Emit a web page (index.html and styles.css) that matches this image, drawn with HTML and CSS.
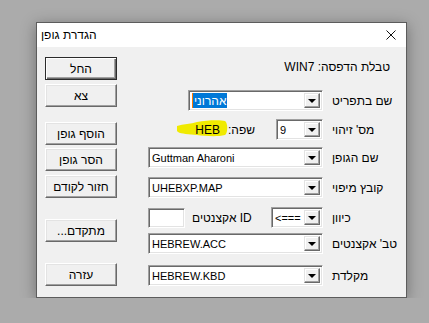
FILE: index.html
```html
<!DOCTYPE html>
<html lang="he">
<head>
    <meta charset="UTF-8">
    <title>הגדרת גופן</title>
    <link rel="stylesheet" href="styles.css">
</head>
<body>
<div class="dialog">
    <div class="titlebar">
        <span class="title" dir="rtl">הגדרת גופן</span>
        <svg class="close" viewBox="0 0 10 10">
            <path d="M0.5 0.5 L9.5 9.5 M9.5 0.5 L0.5 9.5"/>
        </svg>
    </div>
    <div class="content">
        <div class="buttons">
            <button class="btn default" dir="rtl">החל</button>
            <button class="btn" dir="rtl">צא</button>
            <button class="btn" dir="rtl">הוסף גופן</button>
            <button class="btn" dir="rtl">הסר גופן</button>
            <button class="btn" dir="rtl">חזור לקודם</button>
            <button class="btn" dir="rtl">מתקדם...</button>
            <button class="btn" dir="rtl">עזרה</button>
        </div>
        <div class="form">
            <div class="row row-table">
                <span class="label" dir="rtl">טבלת הדפסה: WIN7</span>
            </div>
            <div class="row">
                <div class="ctrl">
                    <div class="combo combo-menu">
                        <div class="combo-text"><span class="selected" dir="rtl">אהרוני</span></div>
                        <div class="drop"><i></i></div>
                    </div>
                </div>
                <span class="label" dir="rtl">שם בתפריט</span>
            </div>
            <div class="row">
                <div class="ctrl">
                    <div class="lang">
                        <svg class="marker" viewBox="0 0 52 17">
                            <path d="M0 6 C6 4 14 4 20 2 C30 0 44 0 48 1 C51 3 51 13 48 15 C40 17 28 16 20 15 C12 14 4 14 1 12 C-1 10 -1 7 0 6 Z"/>
                        </svg>
                        <span class="lang-code">HEB</span>
                        <span class="lang-label" dir="rtl">שפה:</span>
                    </div>
                    <div class="combo combo-id">
                        <div class="combo-text">9</div>
                        <div class="drop"><i></i></div>
                    </div>
                </div>
                <span class="label" dir="rtl">מס' זיהוי</span>
            </div>
            <div class="row">
                <div class="ctrl">
                    <div class="combo combo-wide">
                        <div class="combo-text">Guttman Aharoni</div>
                        <div class="drop"><i></i></div>
                    </div>
                </div>
                <span class="label" dir="rtl">שם הגופן</span>
            </div>
            <div class="row">
                <div class="ctrl">
                    <div class="combo combo-wide">
                        <div class="combo-text">UHEBXP.MAP</div>
                        <div class="drop"><i></i></div>
                    </div>
                </div>
                <span class="label" dir="rtl">קובץ מיפוי</span>
            </div>
            <div class="row">
                <div class="ctrl">
                    <div class="edit"></div>
                    <span class="acc-label" dir="rtl">ID אקצנטים</span>
                    <div class="combo combo-dir">
                        <div class="combo-text">&lt;===</div>
                        <div class="drop"><i></i></div>
                    </div>
                </div>
                <span class="label" dir="rtl">כיוון</span>
            </div>
            <div class="row">
                <div class="ctrl">
                    <div class="combo combo-wide">
                        <div class="combo-text">HEBREW.ACC</div>
                        <div class="drop"><i></i></div>
                    </div>
                </div>
                <span class="label" dir="rtl">טב' אקצנטים</span>
            </div>
            <div class="row">
                <div class="ctrl">
                    <div class="combo combo-wide">
                        <div class="combo-text">HEBREW.KBD</div>
                        <div class="drop"><i></i></div>
                    </div>
                </div>
                <span class="label" dir="rtl">מקלדת</span>
            </div>
        </div>
    </div>
</div>
</body>
</html>
```

FILE: styles.css
```css
body {
    margin: 0;
    padding: 22px 0 0 36px;
    background-color: #ababab;
    font-family: "Liberation Sans", "DejaVu Sans", sans-serif;
    font-size: 12px;
    color: #000;
}

.dialog {
    width: 369px;
    height: 274px;
    border: 1px solid #5c5c5c;
    background-color: #f0f0f0;
    box-shadow: 0 3px 14px rgba(0, 0, 0, 0.35);
    display: flex;
    flex-direction: column;
}

.titlebar {
    height: 24px;
    background-color: #fff;
    display: flex;
    align-items: center;
    justify-content: space-between;
    padding: 0 10px 0 4px;
}
.title {
    font-size: 12px;
}
.close {
    width: 10px;
    height: 10px;
}
.close path {
    stroke: #111;
    stroke-width: 1;
    fill: none;
}

.content {
    display: flex;
    padding: 10px 0 0 8px;
}

/* left column of buttons */
.buttons {
    display: flex;
    flex-direction: column;
    width: 72px;
}
.btn {
    height: 23px;
    margin: 0;
    padding: 0;
    font-family: inherit;
    font-size: 12px;
    color: #000;
    background-color: #f0f0f0;
    border: 1px solid;
    border-color: #fff #696969 #696969 #fff;
    box-shadow: inset -1px -1px #a0a0a0, inset 1px 1px #e3e3e3;
}
.btn.default {
    border-color: #2b2b2b;
    box-shadow: inset 1px 1px #fff, inset -1px -1px #696969, inset -2px -2px #a0a0a0;
}
.btn:nth-child(2) { margin-top: 4px; }
.btn:nth-child(3) { margin-top: 15px; }
.btn:nth-child(4) { margin-top: 3px; }
.btn:nth-child(5) { margin-top: 4px; }
.btn:nth-child(6) { margin-top: 21px; }
.btn:nth-child(7) { margin-top: 21px; }

/* right side form */
.form {
    display: flex;
    flex-direction: column;
    margin-left: 31px;
}
.row {
    display: flex;
    align-items: center;
    height: 21px;
}
.row-table {
    height: 20px;
    justify-content: flex-end;
    padding-right: 7px;
}
.row:nth-child(2) { margin-top: 13px; }
.row:nth-child(3) { margin-top: 8px; }
.row:nth-child(4) { margin-top: 7px; }
.row:nth-child(5) { margin-top: 9px; }
.row:nth-child(6) { margin-top: 9px; }
.row:nth-child(7) { margin-top: 5px; }
.row:nth-child(8) { margin-top: 11px; }

.ctrl {
    width: 175px;
    height: 100%;
    display: flex;
    align-items: center;
    justify-content: flex-end;
}
.label {
    margin-left: 9px;
    white-space: nowrap;
}

.combo {
    height: 21px;
    box-sizing: border-box;
    display: flex;
    background-color: #fff;
    border: 1px solid;
    border-color: #a0a0a0 #fff #fff #a0a0a0;
    box-shadow: inset 1px 1px #696969, inset -1px -1px #e3e3e3;
    padding: 2px;
}
.combo-wide { width: 175px; }
.combo-menu { width: 135px; }
.combo-id { width: 47px; }
.combo-dir { width: 52px; }

.combo-text {
    flex: 1;
    display: flex;
    align-items: center;
    font-size: 11px;
    padding-left: 1px;
    white-space: nowrap;
    overflow: hidden;
}
.selected {
    background-color: #0078d7;
    color: #fff;
    height: 100%;
    display: flex;
    align-items: center;
    padding: 0 1px;
    font-size: 12px;
    border-left: 1px solid #ff7a00;
}

.drop {
    width: 16px;
    box-sizing: border-box;
    background-color: #f0f0f0;
    border: 1px solid;
    border-color: #e3e3e3 #696969 #696969 #e3e3e3;
    box-shadow: inset -1px -1px #a0a0a0, inset 1px 1px #fff;
    display: flex;
    align-items: center;
    justify-content: center;
}
.drop i {
    width: 0;
    height: 0;
    border-left: 4px solid transparent;
    border-right: 4px solid transparent;
    border-top: 4px solid #000;
    margin-top: 1px;
}

.lang {
    position: relative;
    display: flex;
    align-items: center;
    margin-right: 21px;
}
.marker {
    position: absolute;
    left: -18px;
    top: -3px;
    width: 52px;
    height: 17px;
}
.marker path {
    fill: #f0ea00;
}
.lang-code {
    position: relative;
    font-size: 12px;
    margin-right: 8px;
}
.lang-label {
    position: relative;
}

.edit {
    width: 37px;
    height: 20px;
    box-sizing: border-box;
    background-color: #fff;
    border: 1px solid;
    border-color: #a0a0a0 #fff #fff #a0a0a0;
    box-shadow: inset 1px 1px #696969, inset -1px -1px #e3e3e3;
}
.acc-label {
    margin-left: 7px;
    margin-right: auto;
}
```
